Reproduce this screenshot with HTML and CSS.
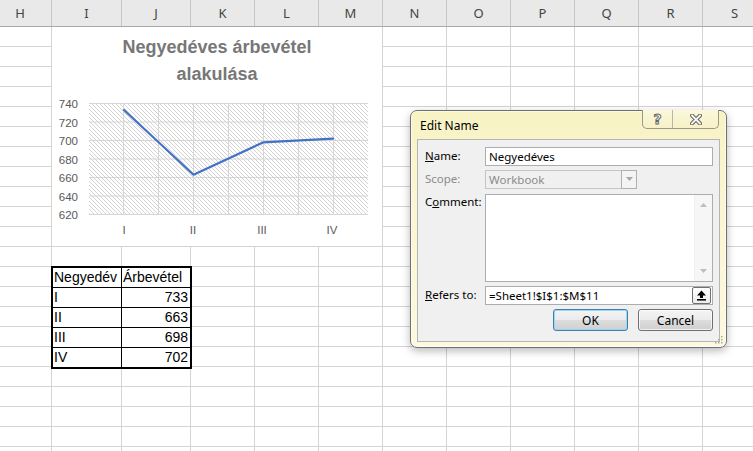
FILE: index.html
```html
<!DOCTYPE html>
<html lang="hu">
<head>
<meta charset="utf-8">
<title>Edit Name</title>
<link rel="stylesheet" href="styles.css">
</head>
<body>
<div class="sheet">
  <div class="colheads">
    <div class="ch ch-h">H</div>
    <div class="ch w70">I</div>
    <div class="ch w69">J</div>
    <div class="ch">K</div>
    <div class="ch">L</div>
    <div class="ch">M</div>
    <div class="ch">N</div>
    <div class="ch">O</div>
    <div class="ch">P</div>
    <div class="ch">Q</div>
    <div class="ch">R</div>
    <div class="ch">S</div>
  </div>
  <div class="cells">
    <div class="col col-h"></div>
    <div class="col w70"></div>
    <div class="col w69"></div>
    <div class="col"></div>
    <div class="col"></div>
    <div class="col"></div>
    <div class="col"></div>
    <div class="col"></div>
    <div class="col"></div>
    <div class="col"></div>
    <div class="col"></div>
    <div class="col"></div>
  </div>

  <div class="chart">
    <div class="chart-title">Negyedéves árbevétel<br>alakulása</div>
    <svg class="plot" width="330" height="158" viewBox="0 0 330 158">
      <defs>
        <pattern id="hatch" width="4" height="4" patternUnits="userSpaceOnUse">
          <path d="M-1,-1 L5,5 M-1,3 L1,5 M3,-1 L5,1" stroke="#c4c4c4" stroke-width="0.75" fill="none"/>
        </pattern>
      </defs>
      <rect x="37" y="15" width="279" height="112" fill="#fff"/>
      <rect x="37" y="15" width="279" height="112" fill="url(#hatch)"/>
      <g stroke="#d6d6d6" stroke-width="1">
        <line x1="37" y1="15.5" x2="316" y2="15.5"/>
        <line x1="37" y1="34" x2="316" y2="34"/>
        <line x1="37" y1="52.5" x2="316" y2="52.5"/>
        <line x1="37" y1="71" x2="316" y2="71"/>
        <line x1="37" y1="89.5" x2="316" y2="89.5"/>
        <line x1="37" y1="108" x2="316" y2="108"/>
        <line x1="37" y1="126.5" x2="316" y2="126.5"/>
        <line x1="71.5" y1="15" x2="71.5" y2="127"/>
        <line x1="106.5" y1="15" x2="106.5" y2="127"/>
        <line x1="141.5" y1="15" x2="141.5" y2="127"/>
        <line x1="176.5" y1="15" x2="176.5" y2="127"/>
        <line x1="211.5" y1="15" x2="211.5" y2="127"/>
        <line x1="246.5" y1="15" x2="246.5" y2="127"/>
        <line x1="281.5" y1="15" x2="281.5" y2="127"/>
      </g>
      <g class="ylab" text-anchor="end">
        <text x="26" y="20">740</text>
        <text x="26" y="38.5">720</text>
        <text x="26" y="57">700</text>
        <text x="26" y="75.5">680</text>
        <text x="26" y="94">660</text>
        <text x="26" y="112.5">640</text>
        <text x="26" y="131">620</text>
      </g>
      <g class="xlab" text-anchor="middle">
        <text x="72" y="146">I</text>
        <text x="141" y="146">II</text>
        <text x="210" y="146">III</text>
        <text x="280" y="146">IV</text>
      </g>
      <polyline points="72,22 141.5,86.7 211,54.4 281,50.7" fill="none" stroke="#4472c4" stroke-width="2.25" stroke-linejoin="round" stroke-linecap="round"/>
    </svg>
  </div>

  <div class="data">
    <div class="cell">Negyedév</div><div class="cell">Árbevétel</div>
    <div class="cell">I</div><div class="cell num">733</div>
    <div class="cell">II</div><div class="cell num">663</div>
    <div class="cell">III</div><div class="cell num">698</div>
    <div class="cell last">IV</div><div class="cell num last">702</div>
  </div>

  <div class="dialog">
    <div class="titlebar">
      <span class="title">Edit Name</span>
      <div class="capbtns">
        <div class="capbtn help"><span class="qmark">?</span></div>
        <div class="capbtn close">
          <svg width="12" height="11" viewBox="0 0 12 11">
            <g stroke-linecap="square">
              <path d="M2 1.5 L10 9.5 M10 1.5 L2 9.5" stroke="#6a6a6a" stroke-width="4"/>
              <path d="M2 1.5 L10 9.5 M10 1.5 L2 9.5" stroke="#f6f6f2" stroke-width="1.8"/>
            </g>
          </svg>
        </div>
      </div>
    </div>
    <div class="panel">
      <div class="row">
        <label class="lbl"><u>N</u>ame:</label>
        <div class="field">Negyedéves</div>
      </div>
      <div class="row r-scope">
        <label class="lbl dis">Scope:</label>
        <div class="combo">
          <span>Workbook</span>
          <span class="dd"><svg width="7" height="4" viewBox="0 0 7 4"><path d="M0 0 L7 0 L3.5 4 Z" fill="#a8a8a8"/></svg></span>
        </div>
      </div>
      <div class="row r-comment">
        <label class="lbl">C<u>o</u>mment:</label>
        <div class="memo">
          <div class="memo-text"></div>
          <div class="vscroll">
            <svg width="7" height="4" viewBox="0 0 7 4"><path d="M0 4 L7 4 L3.5 0 Z" fill="#bdbdbd"/></svg>
            <svg width="7" height="4" viewBox="0 0 7 4"><path d="M0 0 L7 0 L3.5 4 Z" fill="#bdbdbd"/></svg>
          </div>
        </div>
      </div>
      <div class="row r-refers">
        <label class="lbl"><u>R</u>efers to:</label>
        <div class="field refers">
          <span>=Sheet1!$I$1:$M$11</span>
          <span class="collapse">
            <svg width="11" height="11" viewBox="0 0 11 11">
              <path d="M5.5 0.5 L10 5.5 L7 5.5 L7 8 L4 8 L4 5.5 L1 5.5 Z" fill="#000"/>
              <rect x="1" y="9" width="9" height="1.6" fill="#000"/>
            </svg>
          </span>
        </div>
      </div>
      <div class="buttons">
        <button class="btn default">OK</button>
        <button class="btn">Cancel</button>
      </div>
    </div>
    <svg class="grip" width="8" height="8" viewBox="0 0 8 8">
      <g fill="#a9a9a0">
        <rect x="6" y="0" width="1.5" height="1.5"/>
        <rect x="3" y="3" width="1.5" height="1.5"/>
        <rect x="6" y="3" width="1.5" height="1.5"/>
        <rect x="0" y="6" width="1.5" height="1.5"/>
        <rect x="3" y="6" width="1.5" height="1.5"/>
        <rect x="6" y="6" width="1.5" height="1.5"/>
      </g>
    </svg>
  </div>
</div>
</body>
</html>
```

FILE: styles.css
```css
html, body {
  margin: 0;
  padding: 0;
  background: #fff;
}

body {
  width: 753px;
  height: 451px;
  overflow: hidden;
}

.sheet {
  position: relative;
  width: 753px;
  height: 451px;
  overflow: hidden;
}

/* column header row */
.colheads {
  display: flex;
  height: 26px;
  background: #e9e9e9;
  border-bottom: 1px solid #a9a9a9;
  font-family: "Noto Sans", "Open Sans", sans-serif;
  font-size: 13px;
  color: #444;
}

.ch {
  flex: none;
  width: 64px;
  box-sizing: border-box;
  border-right: 1px solid #c6c6c6;
  display: flex;
  align-items: center;
  justify-content: center;
}

.ch-h,
.col-h {
  width: 63px;
  margin-left: -11px;
}

.w70 { width: 70px; }
.w69 { width: 69px; }

/* grid */
.cells {
  display: flex;
  height: 424px;
}

.col {
  flex: none;
  width: 64px;
  box-sizing: border-box;
  border-right: 1px solid #d4d4d4;
  background: repeating-linear-gradient(to bottom, transparent 0, transparent 19px, #d4d4d4 19px, #d4d4d4 20px);
}

.col.col-h { width: 63px; }
.col.w70 { width: 70px; }
.col.w69 { width: 69px; }

/* chart */
.chart {
  position: absolute;
  left: 52px;
  top: 27px;
  width: 330px;
  height: 219px;
  background: #fff;
  display: flex;
  flex-direction: column;
}

.chart-title {
  padding-top: 7px;
  height: 54px;
  text-align: center;
  font-family: "Liberation Sans", Arial, sans-serif;
  font-weight: bold;
  font-size: 18px;
  line-height: 27px;
  color: #777;
}

.plot {
  display: block;
}

.ylab text,
.xlab text {
  font-family: "Liberation Sans", Arial, sans-serif;
  font-size: 11.5px;
  fill: #595959;
}

/* data table */
.data {
  position: absolute;
  left: 51px;
  top: 266px;
  display: grid;
  grid-template-columns: 69px 68px;
  border: 2px solid #000;
  background: #fff;
  font-family: "Liberation Sans", Arial, sans-serif;
  font-size: 14px;
  color: #000;
}

.cell {
  box-sizing: border-box;
  height: 20px;
  line-height: 19px;
  padding: 0 2px 0 1px;
  border-bottom: 1px solid #000;
  white-space: nowrap;
}

.cell:nth-child(odd) {
  border-right: 1px solid #000;
}

.cell.num {
  text-align: right;
}

.cell.last {
  border-bottom: none;
  height: 19px;
}

/* dialog */
.dialog {
  position: absolute;
  left: 410px;
  top: 110px;
  width: 317px;
  height: 238px;
  box-sizing: border-box;
  border: 1px solid #707070;
  border-radius: 7px;
  background: linear-gradient(to bottom, #f8f3c4 0%, #faf6d2 40%, #fcf9e0 100%);
  box-shadow: 0 3px 9px rgba(0, 0, 0, 0.28), inset 0 0 0 1px rgba(255, 255, 255, 0.6);
  display: flex;
  flex-direction: column;
  font-family: "Noto Sans", "Open Sans", sans-serif;
  font-size: 11.5px;
  color: #000;
}

.titlebar {
  height: 28px;
  flex: none;
  display: flex;
  align-items: center;
  padding: 0 7px 0 9px;
}

.title {
  font-size: 12px;
  color: #000;
  padding-top: 1px;
}

.capbtns {
  margin-left: auto;
  align-self: flex-start;
  margin-top: -1px;
  display: flex;
  height: 19px;
  border: 1px solid #9a9886;
  border-top: none;
  border-radius: 0 0 5px 5px;
  background: linear-gradient(to bottom, #fbf8dc, #f6f1c8);
  box-sizing: border-box;
}

.capbtn {
  display: flex;
  align-items: center;
  justify-content: center;
  height: 100%;
}

.capbtn.help {
  width: 29px;
  border-right: 1px solid #b9b7a4;
}

.capbtn.close {
  width: 45px;
}

.qmark {
  font-family: "DejaVu Sans", sans-serif;
  font-weight: bold;
  font-size: 14px;
  line-height: 14px;
  color: #f8f8f4;
  -webkit-text-stroke: 1px #666;
}

.panel {
  flex: 1;
  margin: 0 6px 5px 6px;
  border: 1px solid #b5b5b5;
  background: #f0f0f0;
  padding: 7px 6px 0 7px;
  display: flex;
  flex-direction: column;
}

.row {
  display: flex;
  align-items: flex-start;
}

.lbl {
  width: 60px;
  flex: none;
  padding-top: 1px;
  line-height: 16px;
}

.lbl.dis {
  color: #8b8b8b;
}

.field {
  flex: 1;
  box-sizing: border-box;
  height: 19px;
  border: 1px solid #abadb3;
  background: #fff;
  padding: 0 3px;
  line-height: 17px;
  display: flex;
  align-items: center;
}

.r-scope {
  margin-top: 4px;
}

.combo {
  box-sizing: border-box;
  width: 152px;
  height: 19px;
  border: 1px solid #c5c5c5;
  background: #f0f0f0;
  color: #8b8b8b;
  padding-left: 3px;
  display: flex;
  align-items: center;
}

.dd {
  margin-left: auto;
  width: 16px;
  height: 19px;
  margin-top: -1px;
  margin-right: -1px;
  box-sizing: border-box;
  border: 1px solid #b0b0b0;
  background: #f4f4f4;
  display: flex;
  align-items: center;
  justify-content: center;
}

.r-comment {
  margin-top: 5px;
}

.r-comment .lbl {
  padding-top: 0;
}

.memo {
  flex: 1;
  box-sizing: border-box;
  height: 88px;
  border: 1px solid #abadb3;
  background: #fff;
  display: flex;
}

.memo-text {
  flex: 1;
}

.vscroll {
  width: 17px;
  background: #f6f6f6;
  border-left: 1px solid #f0f0f0;
  display: flex;
  flex-direction: column;
  align-items: center;
  justify-content: space-between;
  padding: 8px 0 8px;
}

.r-refers {
  margin-top: 4px;
}

.r-refers .lbl {
  padding-top: 1px;
}

.refers {
  padding-right: 1px;
}

.collapse {
  margin-left: auto;
  box-sizing: border-box;
  width: 19px;
  height: 17px;
  border: 1px solid #707070;
  border-radius: 2px;
  background: linear-gradient(to bottom, #ffffff, #ececec);
  display: flex;
  align-items: center;
  justify-content: center;
}

.buttons {
  margin-top: 4px;
  display: flex;
  justify-content: flex-end;
  gap: 10px;
}

.btn {
  width: 75px;
  height: 22px;
  box-sizing: border-box;
  border: 1px solid #707070;
  border-radius: 3px;
  background: linear-gradient(to bottom, #f4f4f4 0%, #ebebeb 48%, #dddddd 52%, #cfcfcf 100%);
  box-shadow: inset 0 0 0 1px rgba(255, 255, 255, 0.7);
  font-family: "Noto Sans", "Open Sans", sans-serif;
  font-size: 12px;
  color: #000;
  padding: 0;
}

.btn.default {
  border-color: #3c7fb1;
  box-shadow: inset 0 0 0 1px #9fd5f5;
}

.grip {
  position: absolute;
  right: 3px;
  bottom: 3px;
}
```
